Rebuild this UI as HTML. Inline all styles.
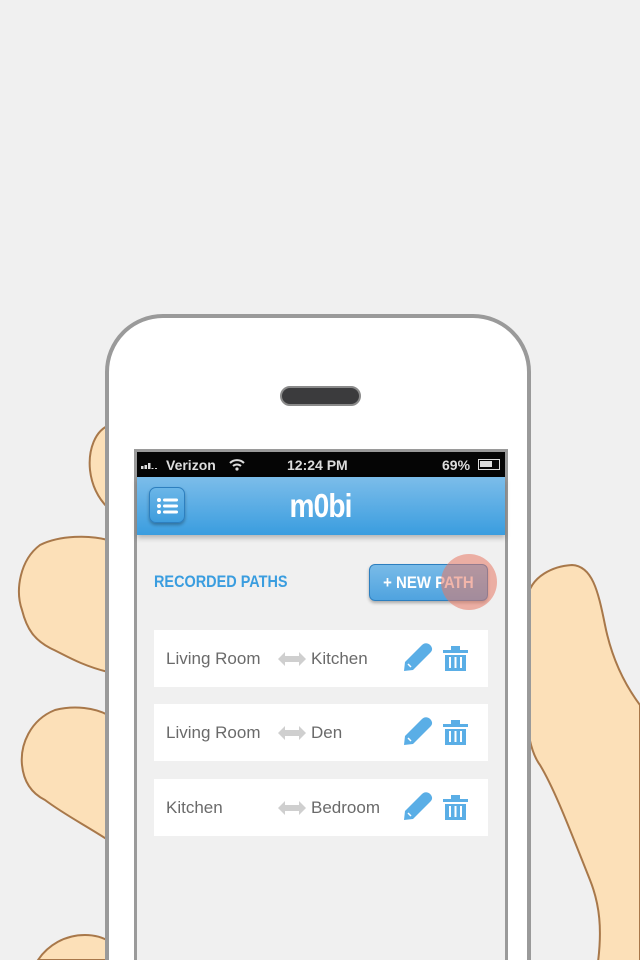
<!DOCTYPE html>
<html style="overflow:hidden"><head><meta charset="utf-8"><style>
*{margin:0;padding:0;box-sizing:border-box}
html,body{width:640px;height:960px;overflow:hidden}
body{background:#f0f0f0;position:relative;font-family:"Liberation Sans",sans-serif}
.abs{position:absolute}
.row{position:absolute;left:154px;width:334px;height:57px;background:#fff;font-size:17px;color:#6a6a6a}
.row span{position:absolute;top:19px}
</style></head><body>
<svg class="abs" style="left:0;top:0" width="640" height="960">
<g fill="#fce0b8" stroke="#a8784a" stroke-width="2">
<path d="M527,600 C530,575 555,566 572,565 C592,566 598,590 605,625 C612,660 625,685 640,705 L640,962 L598,962 C602,930 600,905 590,880 C570,830 555,790 540,765 C525,745 524,700 525,650 Z"/>
<path d="M110,425 C95,430 88,450 90,470 C92,488 100,500 108,508 Z"/>
<path d="M108,540 C90,535 60,535 40,545 C20,560 15,590 22,610 C27,630 35,640 50,648 C65,655 80,665 108,672 Z"/>
<path d="M108,715 C95,708 75,705 55,710 C30,720 20,745 22,765 C24,785 35,795 45,800 C65,815 85,825 108,840 Z"/>
<path d="M125,960 C118,945 105,935 85,935 C65,935 48,945 38,960 Z"/>
</g>
<path d="M107,960 V372 A56,56 0 0 1 163,316 H473 A56,56 0 0 1 529,372 V960" fill="#fff" stroke="#9a9a9a" stroke-width="4"/>
<rect x="281" y="387" width="79" height="18" rx="9" fill="#3b3b3d" stroke="#8a8a8a" stroke-width="2"/>
<path d="M135.5,960 V450.5 H506.5 V960" fill="#f0f0f0" stroke="#9a9a9a" stroke-width="3"/>
</svg>
<div class="abs" style="left:137px;top:452px;width:368px;height:25px;background:#050505;color:#ddd;font-size:14px;font-weight:bold">
<svg class="abs" style="left:4px;top:8px" width="22" height="10"><g fill="#ddd"><rect x="0" y="6" width="2.5" height="3"/><rect x="3.5" y="5" width="2.5" height="4"/><rect x="7" y="3" width="2.5" height="6"/><rect x="10.5" y="8" width="2" height="1"/><rect x="14" y="8" width="2" height="1"/></g></svg>
<span class="abs" style="left:29px;top:5px">Verizon</span>
<svg class="abs" style="left:91px;top:6px" width="18" height="13"><g fill="none" stroke="#ddd" stroke-width="2"><path d="M2,5 A10,10 0 0 1 16,5"/><path d="M5,8 A6,6 0 0 1 13,8"/></g><circle cx="9" cy="11" r="1.6" fill="#ddd"/></svg>
<span class="abs" style="left:150px;top:5px">12:24 PM</span>
<span class="abs" style="left:305px;top:5px">69%</span>
<span class="abs" style="left:341px;top:7px;width:22px;height:11px;border:1.5px solid #ddd"><span class="abs" style="left:1px;top:1px;width:12px;height:6px;background:#ddd"></span></span>
</div>
<div class="abs" style="left:137px;top:477px;width:368px;height:58px;background:linear-gradient(#7cbdea,#3a9ddf);box-shadow:0 3px 5px rgba(0,0,0,.25)">
<div class="abs" style="left:12px;top:10px;width:36px;height:36px;border-radius:7px;background:linear-gradient(#6bb6e8,#3e9ddd);border:1px solid #2d7fbf;box-shadow:0 2px 3px rgba(0,0,0,.3)">
<svg width="36" height="36"><g fill="#fff"><circle cx="9" cy="12" r="2"/><circle cx="9" cy="18" r="2"/><circle cx="9" cy="24" r="2"/><rect x="13" y="10.5" width="15" height="3" rx="1.5"/><rect x="13" y="16.5" width="15" height="3" rx="1.5"/><rect x="13" y="22.5" width="15" height="3" rx="1.5"/></g></svg></div>
<div class="abs" style="left:0;width:368px;top:10px;text-align:center;color:#fff;font-size:33px;font-weight:bold;letter-spacing:-1px"><span style="display:inline-block;transform:scaleX(.85)">m0bi</span></div>
</div>
<div class="abs" style="left:154px;top:572px;color:#3a9ddf;font-size:17px;font-weight:bold;transform:scaleX(.85);transform-origin:left">RECORDED PATHS</div>
<div class="abs" style="left:369px;top:564px;width:119px;height:37px;border-radius:6px;background:linear-gradient(#79bbe8,#4fa3df);border:1px solid #2d7fbf;box-shadow:0 2px 3px rgba(0,0,0,.3);color:#fff;font-weight:bold;font-size:17px;line-height:36px;text-align:center"><span style="display:inline-block;transform:scaleX(.88)">+ NEW PATH</span></div>
<div class="abs" style="left:441px;top:554px;width:56px;height:56px;border-radius:50%;background:rgba(232,120,100,.55)"></div>

<div class="row" style="top:630px"><span style="left:12px">Living Room</span><span style="left:157px">Kitchen</span></div>
<div class="row" style="top:704px"><span style="left:12px">Living Room</span><span style="left:157px">Den</span></div>
<div class="row" style="top:779px"><span style="left:12px">Kitchen</span><span style="left:157px">Bedroom</span></div>
<svg class="abs" style="left:0;top:0" width="640" height="960">
<defs>
<g id="ic">
<path d="M278,659 L285,652 V656 H299 V652 L306,659 L299,666 V662 H285 V666 Z" fill="#cfcfcf"/>
<path d="M404,671 L405,662 L422,645 C425,642 429,643 431,646 C433,649 432,651 430,653 L413,670 Z" fill="#5aaee6"/>
<path d="M408,664 L411,667" stroke="#fff" stroke-width="1.5"/>
<g fill="#5aaee6"><path d="M443,650 h25 v3 h-25z M451,646 h9 v4 h-9z M445,655 h21 v16 h-21z"/></g>
<g fill="#fff"><rect x="449" y="657" width="2" height="11"/><rect x="454.5" y="657" width="2" height="11"/><rect x="460" y="657" width="2" height="11"/></g>
</g></defs>
<use href="#ic"/><use href="#ic" y="74"/><use href="#ic" y="149"/>
</svg>
</body></html>
